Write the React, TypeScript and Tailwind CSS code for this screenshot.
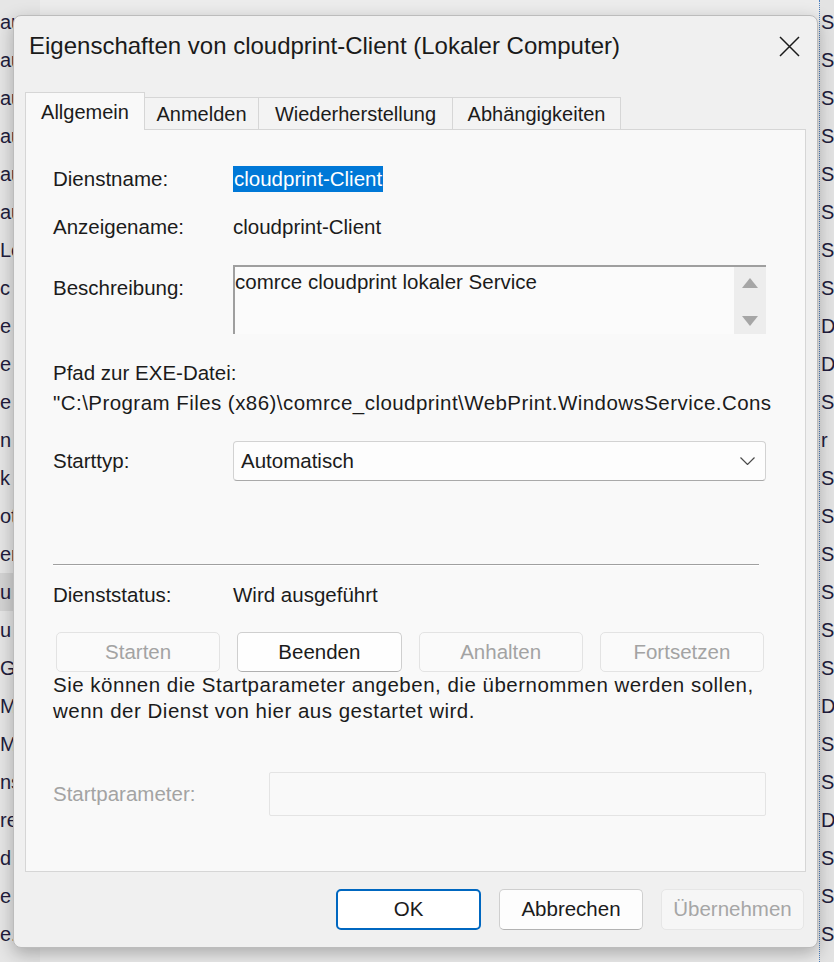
const leftBits = ["au", "au", "au", "au", "au", "au", "Lc", "c", "e", "e", "e", "n", "k", "ot", "er", "u", "u", "G", "M", "M", "ns", "re", "d", "e", "e."];
const rightBits = ["S", "S", "S", "S", "S", "S", "S", "S", "D", "D", "S", "r", "S", "S", "S", "S", "S", "S", "D", "S", "S", "D", "S", "S", "S"];

export default function App() {
  return (
    <div className="relative h-[962px] w-[834px] overflow-hidden bg-[#ececec] font-['Liberation_Sans',Arial,sans-serif] text-[#1b1b1b]">
      <ServiceList />
      <PropertiesDialog />
    </div>
  );
}

function ServiceList() {
  return (
    <div className="flex h-full justify-between">
      <div className="flex w-[40px] flex-col bg-[#e6e6e6] pt-[3px]">
        {leftBits.map((t, i) => (
          <div
            key={i}
            className={`h-[38px] overflow-hidden whitespace-nowrap text-[20px] leading-[38px] text-[#221c3c] ${i === 15 ? "bg-[#d4d4d4]" : ""}`}
          >
            {t}
          </div>
        ))}
      </div>
      <div className="flex w-[15px] flex-col border-l border-dotted border-[#4a7fc0] bg-[#e3e3e3] pt-[3px]">
        {rightBits.map((t, i) => (
          <div key={i} className="h-[38px] overflow-hidden whitespace-nowrap pl-[1px] text-[20px] leading-[38px] text-[#221c3c]">
            {t}
          </div>
        ))}
      </div>
    </div>
  );
}

function PropertiesDialog() {
  return (
    <div className="absolute left-[13px] top-[15px] flex h-[933px] w-[805px] flex-col rounded-[8px] border border-[#bcbcbc] bg-[#f0f0f0] shadow-[0_6px_18px_rgba(0,0,0,0.28)]">
      <div className="flex h-[60px] items-center justify-between pl-[15px] pr-[17px]">
        <span className="text-[24px] leading-none text-[#1a1a1a]">Eigenschaften von cloudprint-Client (Lokaler Computer)</span>
        <svg width="21" height="21" viewBox="0 0 21 21" aria-hidden>
          <path d="M1 1 L20 20 M20 1 L1 20" stroke="#1a1a1a" strokeWidth="1.5" fill="none" />
        </svg>
      </div>

      <div className="ml-[11px] mt-[16px] flex h-[37px] items-end">
        <div className="relative z-10 -mb-px flex h-[38px] w-[120px] items-center justify-center border border-b-0 border-[#d6d6d6] bg-[#f9f9f9] text-[20px]">
          Allgemein
        </div>
        {[
          ["Anmelden", "w-[114px]"],
          ["Wiederherstellung", "w-[194px]"],
          ["Abhängigkeiten", "w-[168px]"],
        ].map(([label, w]) => (
          <div key={label} className={`flex h-[32px] ${w} items-center justify-center border-r border-t border-[#d6d6d6] bg-[#f3f3f3] text-[20px]`}>
            {label}
          </div>
        ))}
      </div>

      <GeneralPanel />

      <div className="mt-[17px] flex justify-end gap-[18px] pr-[13px]">
        <button type="button" className="h-[41px] w-[145px] rounded-[5px] border-2 border-[#0067c0] bg-white text-[20.5px]">
          OK
        </button>
        <button type="button" className="h-[41px] w-[144px] rounded-[5px] border border-[#cfcfcf] border-b-[#b2b2b2] bg-[#fdfdfd] text-[20.5px]">
          Abbrechen
        </button>
        <button type="button" className="h-[41px] w-[143px] rounded-[5px] border border-[#e6e6e6] bg-[#f6f6f6] text-[20.5px] text-[#a6a6a6]">
          Übernehmen
        </button>
      </div>
    </div>
  );
}

function GeneralPanel() {
  return (
    <div className="mx-[11px] flex h-[743px] flex-col border border-[#d6d6d6] bg-[#f9f9f9] pl-[27px] pr-[36px] pt-[36px] text-[20.5px] leading-[26px]">
      <div className="flex h-[26px]">
        <span className="w-[180px]">Dienstname:</span>
        <span className="bg-[#0078d7] px-[1px] text-white">cloudprint-Client</span>
      </div>
      <div className="mt-[22px] flex h-[26px]">
        <span className="w-[180px]">Anzeigename:</span>
        <span>cloudprint-Client</span>
      </div>

      <div className="mt-[25px] flex">
        <span className="mt-[10px] w-[180px]">Beschreibung:</span>
        <div className="flex h-[69px] w-[533px] border-l-2 border-t-2 border-[#9f9f9f] border-b-white border-r-white bg-[#fbfbfb]">
          <div className="flex-1 pt-[2px]">comrce cloudprint lokaler Service</div>
          <div className="flex w-[32px] flex-col items-center justify-between bg-[#ededed] pb-[8px] pt-[11px]">
            <svg width="16" height="10" viewBox="0 0 16 10" aria-hidden>
              <path d="M8 0 L16 10 L0 10 Z" fill="#a6a6a6" />
            </svg>
            <svg width="16" height="10" viewBox="0 0 16 10" aria-hidden>
              <path d="M0 0 L16 0 L8 10 Z" fill="#a6a6a6" />
            </svg>
          </div>
        </div>
      </div>

      <div className="mt-[26px]">Pfad zur EXE-Datei:</div>
      <div className="mt-[4px] whitespace-nowrap tracking-[0.45px]">
        "C:\Program Files (x86)\comrce_cloudprint\WebPrint.WindowsService.Cons
      </div>

      <div className="mt-[25px] flex items-center">
        <span className="w-[180px]">Starttyp:</span>
        <div className="flex h-[40px] w-[533px] items-center justify-between rounded-[4px] border border-[#d2d2d2] border-b-[#a9a9a9] bg-[#fdfdfd] pl-[7px] pr-[10px]">
          <span>Automatisch</span>
          <svg width="15" height="8" viewBox="0 0 15 8" aria-hidden>
            <path d="M0.5 0.5 L7.5 7.5 L14.5 0.5" fill="none" stroke="#4a4a4a" strokeWidth="1.2" />
          </svg>
        </div>
      </div>

      <div className="mt-[83px] h-[2px] w-[706px] border-b border-t border-b-white border-t-[#a0a0a0]" />

      <div className="mt-[16px] flex h-[26px]">
        <span className="w-[180px]">Dienststatus:</span>
        <span>Wird ausgeführt</span>
      </div>

      <div className="ml-[3px] mt-[24px] grid w-[708px] grid-cols-4 gap-[17px]">
        <StatusButton label="Starten" disabled />
        <StatusButton label="Beenden" />
        <StatusButton label="Anhalten" disabled />
        <StatusButton label="Fortsetzen" disabled />
      </div>

      <p className="mt-0 tracking-[0.5px]">
        Sie können die Startparameter angeben, die übernommen werden sollen,
        <br />
        wenn der Dienst von hier aus gestartet wird.
      </p>

      <div className="mt-[48px] flex items-center">
        <span className="w-[216px] text-[#a3a3a3]">Startparameter:</span>
        <div className="h-[44px] w-[497px] rounded-[2px] border border-[#e4e4e4] bg-[#f9f9f9]" />
      </div>
    </div>
  );
}

function StatusButton({ label, disabled }: { label: string; disabled?: boolean }) {
  if (disabled) {
    return (
      <button type="button" className="h-[40px] rounded-[5px] border border-[#e3e3e3] bg-[#fafafa] text-[#a3a3a3]">
        {label}
      </button>
    );
  }
  return (
    <button type="button" className="h-[40px] rounded-[5px] border border-[#cfcfcf] border-b-[#b0b0b0] bg-[#fefefe]">
      {label}
    </button>
  );
}
